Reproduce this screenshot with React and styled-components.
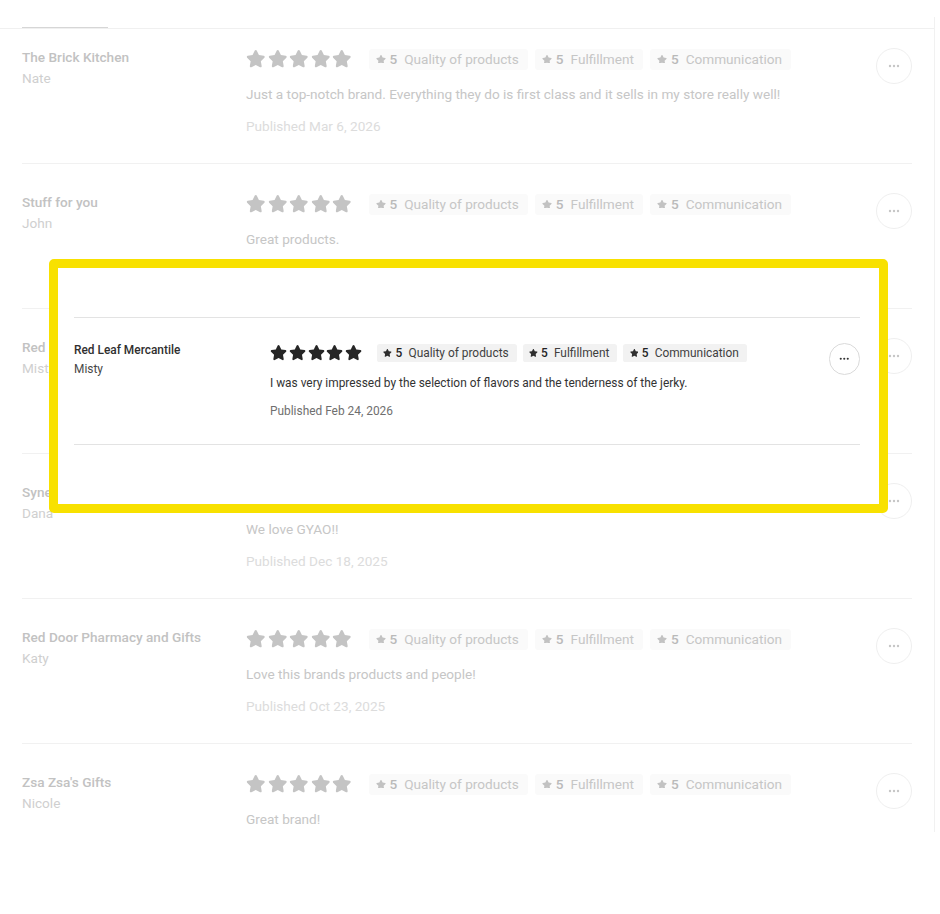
import React from "react";
import styled, { createGlobalStyle, ThemeProvider } from "styled-components";

const FS = "13.6px";

const GlobalStyle = createGlobalStyle`
  html, body { margin: 0; padding: 0; background: #fff; }
  body { font-family: Roboto, "Liberation Sans", Arial, sans-serif; -webkit-font-smoothing: antialiased; }
  * { box-sizing: border-box; }
`;

const muted = {
  name: "#c2c2c2",
  sub: "#cfcfcf",
  stars: "#c4c4c4",
  chipBg: "#fafafa",
  chipStar: "#c2c2c2",
  chipNum: "#b9b9b9",
  chipLabel: "#c6c6c6",
  text: "#c6c6c6",
  published: "#dcdcdc",
  divider: "#f1f1f1",
  btnBorder: "#efefef",
  dots: "#c6c6c6",
};

const full = {
  name: "#2f2f2f",
  sub: "#474747",
  stars: "#262626",
  chipBg: "#f2f2f2",
  chipStar: "#2f2f2f",
  chipNum: "#222",
  chipLabel: "#3f3f3f",
  text: "#333",
  published: "#6f6f6f",
  divider: "#e3e3e3",
  btnBorder: "#dadada",
  dots: "#333",
};

const Screen = styled.div`
  position: relative;
  width: 940px;
  height: 914px;
  overflow: hidden;
`;

const Panel = styled.div`
  margin-top: 17px;
  width: 935px;
  height: 815px;
  border-right: 1px solid #f1f1f1;
  overflow: hidden;
`;

const TabBar = styled.div`
  height: 12px;
  padding-left: 22px;
  border-bottom: 1px solid #f0f0f0;
`;

const Tab = styled.div`
  width: 86px;
  height: 11px;
  border-bottom: 1px solid #d6d6d6;
`;

const List = styled.div`
  padding: 0 22px;
  & > div:first-child { padding-top: 19px; }
`;

const Row = styled.div`
  display: grid;
  grid-template-columns: 224px 1fr 36px;
  padding: 29px 0 28px;
  border-bottom: 1px solid ${(p) => p.theme.divider};
  border-top: ${(p) => (p.$framed ? `1px solid ${p.theme.divider}` : "none")};
  zoom: ${(p) => p.$zoom || 1};
`;

const Who = styled.div`
  display: flex;
  flex-direction: column;
`;

const Store = styled.div`
  font-size: ${FS};
  line-height: 18px;
  font-weight: 500;
  color: ${(p) => p.theme.name};
`;

const Person = styled.div`
  margin-top: 3px;
  font-size: ${FS};
  line-height: 18px;
  color: ${(p) => p.theme.sub};
`;

const Main = styled.div`
  display: flex;
  flex-direction: column;
`;

const Ratings = styled.div`
  display: flex;
  align-items: center;
  height: 22px;
`;

const Stars = styled.div`
  display: flex;
  gap: 2px;
  color: ${(p) => p.theme.stars};
  margin-right: 17px;
`;

const Chips = styled.div`
  display: flex;
  gap: 7px;
`;

const Chip = styled.div`
  display: inline-flex;
  align-items: center;
  height: 21px;
  padding: 0 9px 0 7px;
  border-radius: 3px;
  background: ${(p) => p.theme.chipBg};
  font-size: ${FS};
  color: ${(p) => p.theme.chipLabel};
  svg { color: ${(p) => p.theme.chipStar}; }
`;

const Num = styled.span`
  font-weight: 500;
  margin: 0 7px 0 4px;
  color: ${(p) => p.theme.chipNum};
`;

const Body = styled.p`
  margin: 15px 0 0;
  font-size: ${FS};
  line-height: 18px;
  color: ${(p) => p.theme.text};
`;

const Published = styled.div`
  margin-top: 14px;
  font-size: ${FS};
  line-height: 18px;
  color: ${(p) => p.theme.published};
`;

const MoreButton = styled.button`
  width: 36px;
  height: 36px;
  border-radius: 50%;
  border: 1px solid ${(p) => p.theme.btnBorder};
  background: #fff;
  padding: 0;
  display: flex;
  align-items: center;
  justify-content: center;
  color: ${(p) => p.theme.dots};
  align-self: start;
`;

const Highlight = styled.div`
  position: absolute;
  left: 49px;
  top: 259px;
  width: 839px;
  height: 254px;
  border: 9px solid #f8e100;
  border-radius: 5px;
  background: #fff;
  padding: 49px 19px 0 16px;
`;

const STAR =
  "M316.9 18C311.6 7 300.4 0 288.1 0s-23.4 7-28.8 18L195 150.3 51.4 171.5c-12 1.8-22 10.2-25.7 21.7s-.7 24.2 7.9 32.7L137.8 329 113.2 474.7c-2 12 3 24.2 12.9 31.3s23 8 33.8 2.3l128.3-68.5 128.3 68.5c10.8 5.7 23.9 4.9 33.8-2.3s14.9-19.3 12.9-31.3L438.5 329 542.7 225.9c8.6-8.5 11.7-21.2 7.9-32.7s-13.7-19.9-25.7-21.7L381.2 150.3 316.9 18z";

const StarIcon = ({ size }) => (
  <svg width={size} height={(size * 512) / 576} viewBox="0 0 576 512" aria-hidden="true">
    <path d={STAR} fill="currentColor" />
  </svg>
);

const Dots = () => (
  <svg width="12" height="4" viewBox="0 0 12 4" aria-hidden="true">
    <circle cx="2" cy="2" r="1.2" fill="currentColor" />
    <circle cx="6" cy="2" r="1.2" fill="currentColor" />
    <circle cx="10" cy="2" r="1.2" fill="currentColor" />
  </svg>
);

const categories = ["Quality of products", "Fulfillment", "Communication"];

const reviews = [
  {
    store: "The Brick Kitchen",
    person: "Nate",
    text: "Just a top-notch brand. Everything they do is first class and it sells in my store really well!",
    date: "Mar 6, 2026",
  },
  { store: "Stuff for you", person: "John", text: "Great products.", date: "Mar 1, 2026" },
  {
    store: "Red Leaf Mercantile",
    person: "Misty",
    text: "I was very impressed by the selection of flavors and the tenderness of the jerky.",
    date: "Feb 24, 2026",
  },
  { store: "Synergy Gifts", person: "Dana", text: "We love GYAO!!", date: "Dec 18, 2025" },
  {
    store: "Red Door Pharmacy and Gifts",
    person: "Katy",
    text: "Love this brands products and people!",
    date: "Oct 23, 2025",
  },
  { store: "Zsa Zsa's Gifts", person: "Nicole", text: "Great brand!" },
];

const Review = ({ r, framed, zoom }) => (
  <Row $framed={framed} $zoom={zoom}>
    <Who>
      <Store>{r.store}</Store>
      <Person>{r.person}</Person>
    </Who>
    <Main>
      <Ratings>
        <Stars>
          {[0, 1, 2, 3, 4].map((i) => (
            <StarIcon key={i} size={19.5} />
          ))}
        </Stars>
        <Chips>
          {categories.map((c) => (
            <Chip key={c}>
              <StarIcon size={10} />
              <Num>5</Num>
              {c}
            </Chip>
          ))}
        </Chips>
      </Ratings>
      <Body>{r.text}</Body>
      {r.date && <Published>Published {r.date}</Published>}
    </Main>
    <MoreButton aria-label="More options">
      <Dots />
    </MoreButton>
  </Row>
);

export default function App() {
  return (
    <Screen>
      <GlobalStyle />
      <ThemeProvider theme={muted}>
        <Panel>
          <TabBar>
            <Tab />
          </TabBar>
          <List>
            {reviews.map((r) => (
              <Review key={r.store} r={r} />
            ))}
          </List>
        </Panel>
      </ThemeProvider>
      <ThemeProvider theme={full}>
        <Highlight>
          <Review r={reviews[2]} framed zoom={0.875} />
        </Highlight>
      </ThemeProvider>
    </Screen>
  );
}
